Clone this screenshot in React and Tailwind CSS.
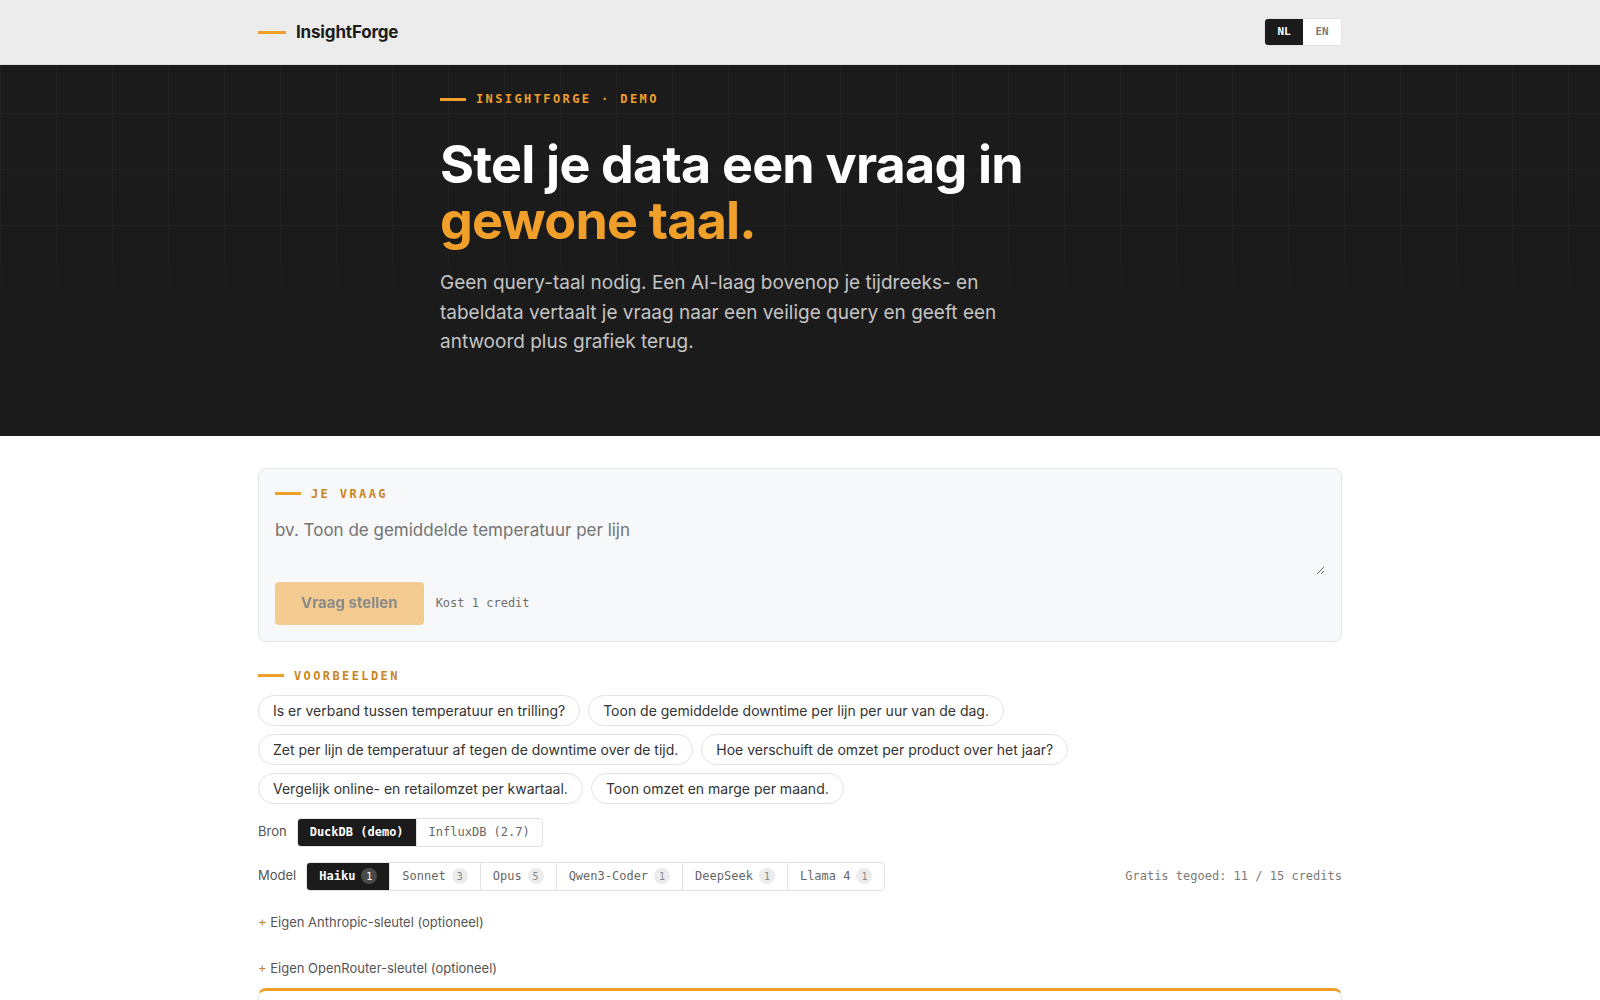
import React, { useState } from "react";

const SANS = "font-['Inter','Noto_Sans',sans-serif]";
const MONO = "font-['DejaVu_Sans_Mono','Liberation_Mono',monospace]";

const examples = [
  "Is er verband tussen temperatuur en trilling?",
  "Toon de gemiddelde downtime per lijn per uur van de dag.",
  "Zet per lijn de temperatuur af tegen de downtime over de tijd.",
  "Hoe verschuift de omzet per product over het jaar?",
  "Vergelijk online- en retailomzet per kwartaal.",
  "Toon omzet en marge per maand.",
];

const sources = ["DuckDB (demo)", "InfluxDB (2.7)"];

const models = [
  { name: "Haiku", cost: 1 },
  { name: "Sonnet", cost: 3 },
  { name: "Opus", cost: 5 },
  { name: "Qwen3-Coder", cost: 1 },
  { name: "DeepSeek", cost: 1 },
  { name: "Llama 4", cost: 1 },
];

function Eyebrow({ children, light }) {
  return (
    <div className="flex items-center gap-[10px]">
      <span className="block h-[3px] w-[26px] bg-[#f0a02a]" />
      <span
        className={`${MONO} text-[12px] font-bold uppercase leading-[18px] tracking-[0.2em] ${
          light ? "text-[#f0a02a]" : "text-[#c9861f]"
        }`}
      >
        {children}
      </span>
    </div>
  );
}

export default function App() {
  const [lang, setLang] = useState("NL");
  const [source, setSource] = useState(0);
  const [model, setModel] = useState(0);
  const [question, setQuestion] = useState("");

  return (
    <div className={`${SANS} min-h-screen bg-white text-[#1b1b1b]`}>
      {/* Top bar */}
      <header className="border-b border-[#dedede] bg-[#ececec]">
        <div className="mx-auto flex h-16 w-[1084px] items-center justify-between">
          <div className="flex items-center gap-[10px]">
            <span className="block h-[3px] w-[28px] bg-[#f0a02a]" />
            <span className="text-[17px] font-bold leading-none tracking-[-0.01em] text-[#1b1b1b]">
              InsightForge
            </span>
          </div>
          <div className="flex h-[28px] overflow-hidden rounded-[4px] border border-[#e2e2e2] bg-white">
            {["NL", "EN"].map((l) => (
              <button
                key={l}
                onClick={() => setLang(l)}
                className={`${MONO} w-[38px] text-[11px] font-bold ${
                  lang === l ? "bg-[#1b1b1b] text-white" : "bg-white text-[#7a7a7a]"
                }`}
              >
                {l}
              </button>
            ))}
          </div>
        </div>
      </header>

      {/* Hero */}
      <section className="relative overflow-hidden bg-[#1b1b1b]">
        <div className="pointer-events-none absolute inset-0 bg-[linear-gradient(to_right,rgba(255,255,255,0.035)_1px,transparent_1px),linear-gradient(to_bottom,rgba(255,255,255,0.035)_1px,transparent_1px)] bg-[size:56px_56px] bg-[position:0_48px] [mask-image:linear-gradient(to_bottom,black_25%,transparent_75%)]" />
        <div className="relative mx-auto w-[720px] pb-[79px] pt-[25px]">
          <Eyebrow light>InsightForge · Demo</Eyebrow>
          <h1 className="mt-[29px] text-[52px] font-bold leading-[56px] tracking-[-0.015em] text-white">
            Stel je data een vraag in
            <br />
            <span className="text-[#f0a02a]">gewone taal.</span>
          </h1>
          <p className="mt-[19px] max-w-[580px] text-[19px] leading-[29.5px] text-[#c4c4c4]">
            Geen query-taal nodig. Een AI-laag bovenop je tijdreeks- en tabeldata vertaalt je vraag
            naar een veilige query en geeft een antwoord plus grafiek terug.
          </p>
        </div>
      </section>

      {/* Ask area */}
      <main className="mx-auto w-[1084px] pt-8">
        <div className="rounded-lg border border-[#e4e6ea] bg-[#f7f8fa] p-4">
          <Eyebrow>Je vraag</Eyebrow>
          <textarea
            value={question}
            onChange={(e) => setQuestion(e.target.value)}
            placeholder="bv. Toon de gemiddelde temperatuur per lijn"
            className={`${SANS} mt-[10px] block h-[62px] w-full resize-y bg-transparent py-[4px] pr-3 text-[17px] leading-[26px] text-[#1b1b1b] outline-none placeholder:text-[#737373]`}
          />
          <div className="mt-[7px] flex items-center gap-3">
            <button
              disabled={!question}
              className="h-[43px] rounded-[4px] bg-[#f0a02a] px-[26px] text-[15px] font-bold text-[#1b1b1b] disabled:opacity-50"
            >
              Vraag stellen
            </button>
            <span className={`${MONO} text-[12px] text-[#6e6e6e]`}>Kost 1 credit</span>
          </div>
        </div>

        <div className="mt-[25px]">
          <Eyebrow>Voorbeelden</Eyebrow>
          <div className="mt-[10px] flex flex-wrap gap-2">
            {examples.map((q) => (
              <button
                key={q}
                onClick={() => setQuestion(q)}
                className="rounded-full border border-[#e2e3e6] bg-white px-[14px] py-[6px] text-[14px] leading-[17px] text-[#333]"
              >
                {q}
              </button>
            ))}
          </div>
        </div>

        <div className="mt-[14px] flex items-center gap-[10px]">
          <span className="text-[13px] text-[#555]">Bron</span>
          <div className="flex h-[29px] overflow-hidden rounded-[4px] border border-[#e2e3e6] bg-white">
            {sources.map((s, i) => (
              <button
                key={s}
                onClick={() => setSource(i)}
                className={`${MONO} px-3 text-[12px] ${
                  source === i ? "bg-[#1b1b1b] font-bold text-white" : "text-[#666]"
                } ${i > 0 ? "border-l border-[#e2e3e6]" : ""}`}
              >
                {s}
              </button>
            ))}
          </div>
        </div>

        <div className="mt-[15px] flex items-center justify-between">
          <div className="flex items-center gap-[10px]">
            <span className="text-[13px] text-[#555]">Model</span>
            <div className="flex h-[29px] overflow-hidden rounded-[4px] border border-[#e2e3e6] bg-white">
              {models.map((m, i) => (
                <button
                  key={m.name}
                  onClick={() => setModel(i)}
                  className={`${MONO} flex items-center gap-[6px] px-3 text-[12px] ${
                    model === i ? "bg-[#1b1b1b] font-bold text-white" : "text-[#666]"
                  } ${i > 0 ? "border-l border-[#e2e3e6]" : ""}`}
                >
                  {m.name}
                  <span
                    className={`flex h-[16px] w-[16px] items-center justify-center rounded-full text-[10px] font-normal ${
                      model === i ? "bg-[#4a4a4a] text-white" : "bg-[#ececec] text-[#888]"
                    }`}
                  >
                    {m.cost}
                  </span>
                </button>
              ))}
            </div>
          </div>
          <span className={`${MONO} text-[12px] text-[#7a7a7a]`}>Gratis tegoed: 11 / 15 credits</span>
        </div>

        <div className="mt-[21px] flex flex-col gap-[26px]">
          <button className="self-start text-[13px] leading-5 text-[#555]">
            <span className="text-[#c9861f]">+</span> Eigen Anthropic-sleutel (optioneel)
          </button>
          <button className="self-start text-[13px] leading-5 text-[#555]">
            <span className="text-[#c9861f]">+</span> Eigen OpenRouter-sleutel (optioneel)
          </button>
        </div>

        <div className="mt-[10px] h-[60px] rounded-t-lg border-x border-t-[3px] border-[#e4e6ea] border-t-[#f0a02a] bg-white" />
      </main>
    </div>
  );
}
